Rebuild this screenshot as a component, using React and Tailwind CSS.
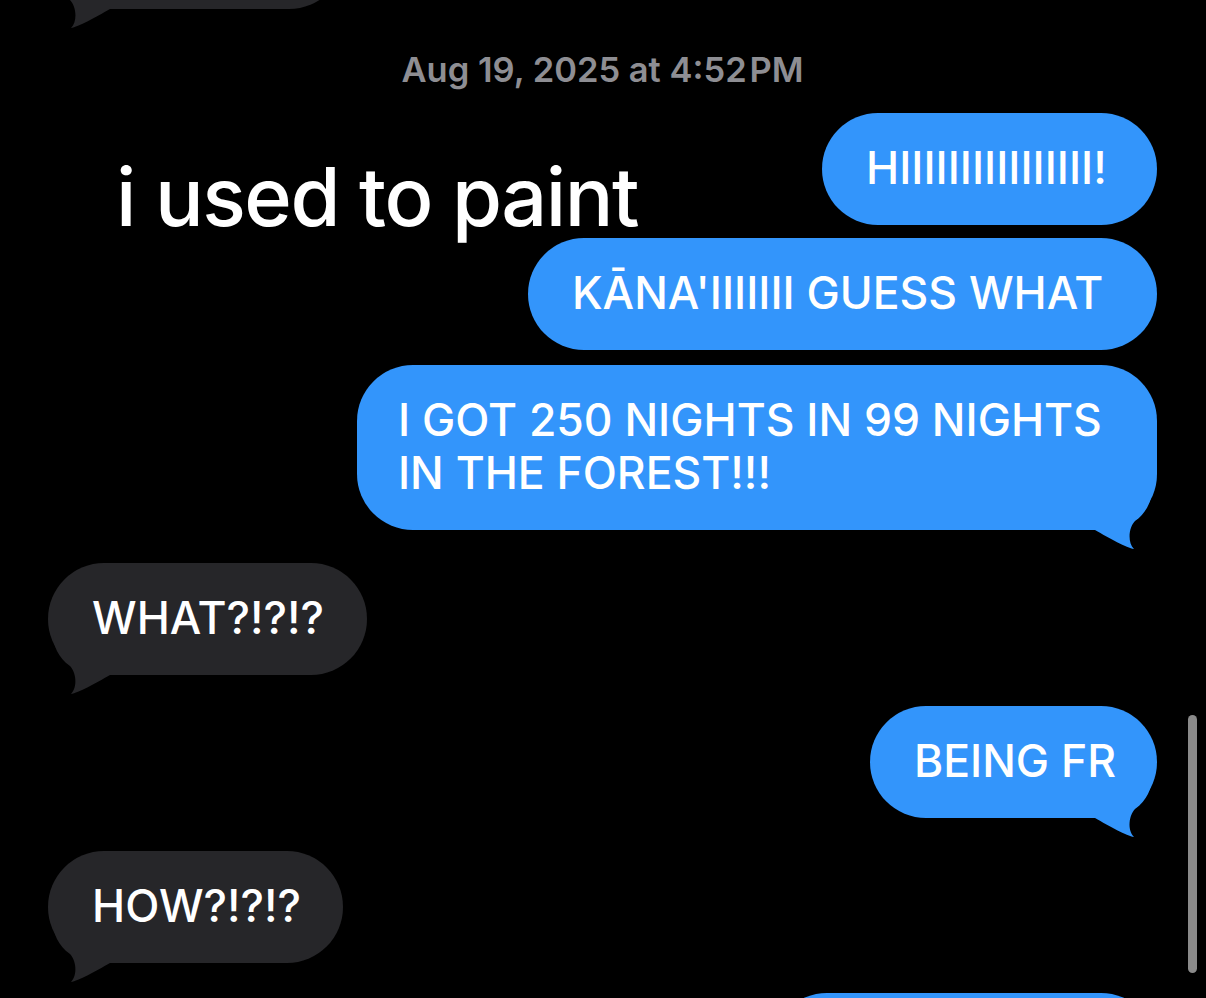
import React from 'react';

const BLUE = 'bg-[#3395fb]';
const GRAY = 'bg-[#262629]';

function Tail({ mine }) {
  // iMessage-style tail hanging off the bottom corner of a bubble
  return (
    <svg
      viewBox="0 0 70 60"
      className={
        mine
          ? 'absolute right-0 bottom-[-20px] h-[60px] w-[70px] fill-[#3395fb]'
          : 'absolute left-0 bottom-[-20px] h-[60px] w-[70px] -scale-x-100 fill-[#262629]'
      }
    >
      <path d="M0 0 L65 0 C65 9 60 23 48 31 C42 37 40 52 47 59 C40 58 22 48 8 40 L0 40 Z" />
    </svg>
  );
}

function Bubble({ mine, tail, width, className = '', children }) {
  return (
    <div
      className={`relative rounded-[56px] pt-[29px] pb-[30px] text-[44.5px] font-medium leading-[53px] text-white whitespace-nowrap ${
        mine ? `self-end pl-[44px] ${BLUE}` : `self-start pl-[44px] ${GRAY}`
      } ${width} ${className}`}
    >
      <span className="relative z-10">{children}</span>
      {tail && <Tail mine={mine} />}
    </div>
  );
}

export default function App() {
  return (
    <div
      className="relative h-[998px] w-[1206px] overflow-hidden bg-black"
      style={{ fontFamily: 'Inter, "Liberation Sans", Arial, sans-serif' }}
    >
      <div className="flex flex-col pl-[48px] pr-[49px]">
        {/* previous message, scrolled mostly out of view */}
        <Bubble tail width="w-[297px]" className="-mt-[103px]">
          &nbsp;
        </Bubble>

        <div className="mt-[40px] text-center text-[34.5px] font-semibold leading-[42px] text-[#8e8e93]">
          Aug 19, 2025 at 4:52&#8202;PM
        </div>

        <Bubble mine width="w-[335px]" className="mt-[22px]">
          HIIIIIIIIIIIIIIII!
        </Bubble>
        <Bubble mine width="w-[629px]" className="mt-[13px]">
          KĀNA'IIIIIII GUESS WHAT
        </Bubble>
        <Bubble mine tail width="w-[800px]" className="mt-[15px] !pl-[41px]">
          I GOT 250 NIGHTS IN 99 NIGHTS
          <br />
          IN THE FOREST!!!
        </Bubble>

        <Bubble tail width="w-[319px]" className="mt-[33px]">
          WHAT?!?!?
        </Bubble>

        <Bubble mine tail width="w-[287px]" className="mt-[31px]">
          BEING FR
        </Bubble>

        <Bubble tail width="w-[295px]" className="mt-[33px]">
          HOW?!?!?
        </Bubble>

        <Bubble mine width="w-[386px]" className="mt-[30px]">
          &nbsp;
        </Bubble>
      </div>

      {/* caption laid over the conversation */}
      <div className="absolute left-[116px] top-[157px] text-[81px] font-medium leading-none tracking-[-1.5px] text-white">
        i used to paint
      </div>

      {/* scroll indicator */}
      <div className="absolute left-[1188px] top-[715px] h-[258px] w-[9px] rounded-full bg-[#8a8a8a]" />
    </div>
  );
}
